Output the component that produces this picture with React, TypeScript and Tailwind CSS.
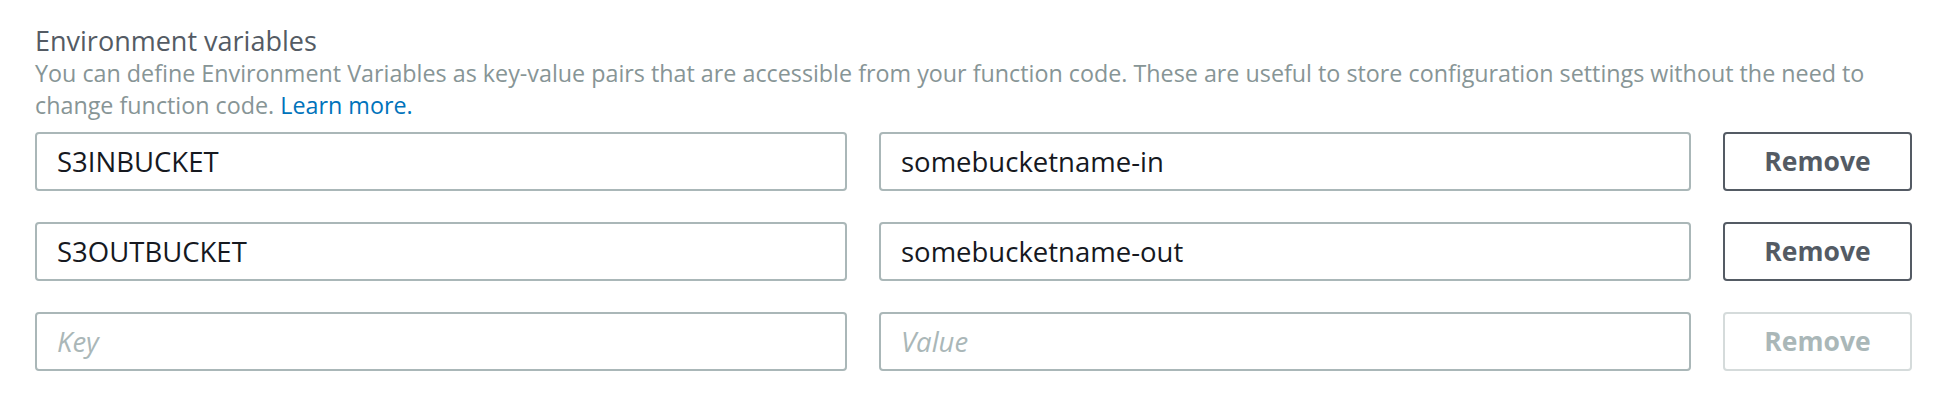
const rows = [
  { key: "S3INBUCKET", value: "somebucketname-in" },
  { key: "S3OUTBUCKET", value: "somebucketname-out" },
];

export default function App() {
  return (
    <div className="w-full h-[400px] bg-white pl-[35px] pr-[24px] pt-[24px] font-['Open_Sans',sans-serif]">
      <h2 className="text-[27px] leading-[33px] text-[#545b64]">Environment variables</h2>
      <p className="text-[23.3px] leading-[32px] text-[#879596]">
        You can define Environment Variables as key-value pairs that are accessible from your function code. These are useful to store configuration settings without the need to change function code.{" "}
        <span className="text-[#0073bb]">Learn more.</span>
      </p>

      {/* key / value rows */}
      <div className="mt-[11px] grid grid-cols-[1fr_1fr_189px] gap-x-[32px] gap-y-[31px]">
        {rows.map((row) => (
          <>
            <div key={row.key} className="h-[59px] flex items-center px-[20px] border-2 border-[#aab7b8] rounded-[4px] text-[27.5px] text-[#16191f]">
              {row.key}
            </div>
            <div className="h-[59px] flex items-center px-[20px] border-2 border-[#aab7b8] rounded-[4px] text-[27.5px] text-[#16191f]">
              {row.value}
            </div>
            <button className="h-[59px] flex items-center justify-center border-2 border-[#545b64] rounded-[4px] text-[26.5px] font-bold text-[#545b64]">
              Remove
            </button>
          </>
        ))}
        <div className="h-[59px] flex items-center px-[20px] border-2 border-[#aab7b8] rounded-[4px] text-[27.5px] italic text-[#aab7b8]">
          Key
        </div>
        <div className="h-[59px] flex items-center px-[20px] border-2 border-[#aab7b8] rounded-[4px] text-[27.5px] italic text-[#aab7b8]">
          Value
        </div>
        <button className="h-[59px] flex items-center justify-center border-2 border-[#d5dbdb] rounded-[4px] text-[26.5px] font-bold text-[#aab7b8]">
          Remove
        </button>
      </div>
    </div>
  );
}
